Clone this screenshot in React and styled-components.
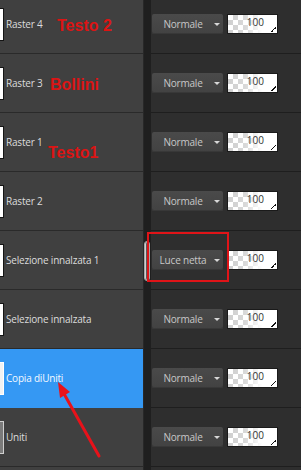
import React from 'react'
import styled, { createGlobalStyle } from 'styled-components'

const Global = createGlobalStyle`
  html, body {
    margin: 0;
    padding: 0;
    background: #2d2d2d;
  }
`

const Panel = styled.div`
  position: relative;
  width: 301px;
  height: 470px;
  overflow: hidden;
  font-family: "Open Sans", "DejaVu Sans", sans-serif;
`

const List = styled.div`
  display: flex;
  flex-direction: column;
  margin-top: -5px;
`

const Row = styled.div`
  position: relative;
  display: grid;
  grid-template-columns: 143px 8px 1fr;
  height: 59px;
`

const NameCell = styled.div`
  display: flex;
  align-items: center;
  gap: 2px;
  overflow: hidden;
  background: ${p => (p.$selected ? '#3598f3' : '#404040')};
  border-bottom: 1px solid ${p => (p.$selected ? '#3598f3' : '#2a2a2a')};
  color: ${p => (p.$selected ? '#f4f8ff' : '#dcdcdc')};
  font-size: 10px;
  letter-spacing: -0.2px;
`

const Thumb = styled.div`
  flex: none;
  width: 30px;
  height: 31px;
  margin-left: -28px;
  background: ${p => p.$fill || '#fff'};
  border: 1px solid ${p => p.$edge || '#151515'};
`

const Divider = styled.div`
  display: flex;
  align-items: center;
  padding-left: 1px;
  background: #1f1f1f;
  box-shadow: inset 1px 0 0 #282828;
`

const Handle = styled.div`
  width: 4px;
  height: 38px;
  border-radius: 3px;
  background: #5a5a5a;
  border: 1px solid #a8a8a8;
  box-shadow: inset 1px 0 0 #d0d0d0;
`

const ControlCell = styled.div`
  display: flex;
  align-items: center;
  gap: 4px;
  padding-left: 1px;
  background: #2e2e2e;
  border-bottom: 1px solid #1e1e1e;
`

const Blend = styled.div`
  display: flex;
  align-items: center;
  width: 71px;
  height: 20px;
  box-sizing: border-box;
  padding-right: 3px;
  border-radius: 2px;
  background: linear-gradient(#4a4a4a, #424242);
  box-shadow: inset 0 -1px 0 #383838;
  color: #c8c8c8;
  font-size: 10px;
  letter-spacing: -0.2px;
`

const BlendLabel = styled.span`
  flex: 1;
  text-align: center;
`

const Caret = styled.span`
  width: 0;
  height: 0;
  border-left: 3px solid transparent;
  border-right: 3px solid transparent;
  border-top: 3px solid #d8d8d8;
`

const Opacity = styled.div`
  position: relative;
  width: 51px;
  height: 20px;
  box-sizing: border-box;
  padding: 1px 13px 0 0;
  text-align: right;
  color: #333;
  font-size: 10px;
  line-height: 12px;
  background:
    linear-gradient(to right, rgba(255, 255, 255, 0) 0, rgba(255, 255, 255, 0.2) 35%, #fff 70%),
    repeating-conic-gradient(#cfcfcf 0 25%, #fff 0 50%) 0 0 / 10px 10px;
  border: 1px solid #1a1a1a;

  &::after {
    content: '';
    position: absolute;
    right: 1px;
    bottom: 1px;
    width: 5px;
    height: 5px;
    background: linear-gradient(135deg, transparent 45%, #111 45%, #111 60%, transparent 60%);
  }
`

const Note = styled.span`
  position: absolute;
  left: ${p => p.$x}px;
  top: ${p => p.$y}px;
  color: #dc1414;
  font-family: "Liberation Sans", Arial, sans-serif;
  font-weight: bold;
  font-size: 16px;
  line-height: 16px;
  letter-spacing: 0;
`

const Highlight = styled.div`
  position: absolute;
  left: 147px;
  top: 1px;
  width: 82px;
  height: 50px;
  box-sizing: border-box;
  border: 2px solid #e01418;
  pointer-events: none;
`

const Arrow = styled.svg`
  position: absolute;
  left: 0;
  top: 0;
  pointer-events: none;
`

const layers = [
  { name: 'Raster 4', note: { text: 'Testo 2', x: 57, y: 23 } },
  { name: 'Raster 3', note: { text: 'Bollini', x: 50, y: 23 } },
  { name: 'Raster 1', note: { text: 'Testo1', x: 48, y: 32 } },
  { name: 'Raster 2' },
  { name: 'Selezione innalzata 1', mode: 'Luce netta', marked: true },
  { name: 'Selezione innalzata' },
  { name: 'Copia diUniti', selected: true, thumb: { fill: '#f2f2f2', edge: '#ffffff' } },
  { name: 'Uniti', thumb: { fill: '#7a7a7a', edge: '#cfcfcf' } },
  { name: '' },
]

const Layer = ({ name, mode = 'Normale', note, marked, selected, thumb = {} }) => (
  <Row>
    <NameCell $selected={selected}>
      {name && <Thumb $fill={thumb.fill} $edge={thumb.edge} />}
      <span>{name}</span>
      {note && <Note $x={note.x} $y={note.y}>{note.text}</Note>}
    </NameCell>
    <Divider>{marked && <Handle />}</Divider>
    <ControlCell>
      {name && (
        <>
          <Blend>
            <BlendLabel>{mode}</BlendLabel>
            <Caret />
          </Blend>
          <Opacity>100</Opacity>
        </>
      )}
    </ControlCell>
    {marked && <Highlight />}
  </Row>
)

const App = () => (
  <Panel>
    <Global />
    <List>
      {layers.map(layer => (
        <Layer key={layer.name || 'tail'} {...layer} />
      ))}
    </List>
    <Arrow width="301" height="470">
      <line x1="99" y1="456" x2="63" y2="392" stroke="#e8121a" strokeWidth="3" strokeLinecap="round" />
      <polygon points="58,382 70,392 60,398" fill="#e8121a" />
    </Arrow>
  </Panel>
)

export default App
